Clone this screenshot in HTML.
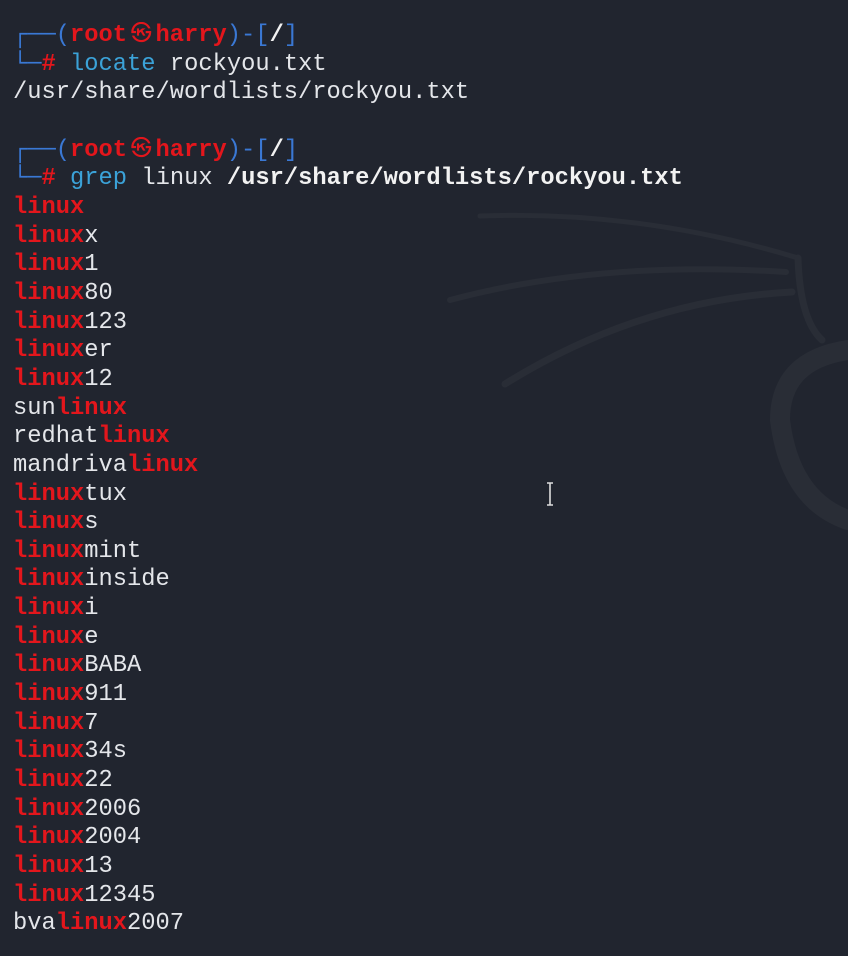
<!DOCTYPE html>
<html><head><meta charset="utf-8"><style>
html,body{margin:0;padding:0}
body{width:848px;height:956px;background:#21252f;overflow:hidden;position:relative;}
.bg{position:absolute;left:0;top:0}
pre{position:absolute;left:13px;top:22px;margin:0;font-family:"Liberation Mono","DejaVu Sans Mono",monospace;font-size:23.75px;line-height:28.65px;color:#e4e6ea;letter-spacing:0;}
.b{color:#3a78d4}.r{color:#e3161c;font-weight:bold}.c{color:#3ba2d8}.w{font-weight:bold;color:#f2f2f2}
.k{display:inline-block;width:28.5px;overflow:hidden;text-align:center;font-size:21px;vertical-align:top;font-weight:normal}
.cur{position:absolute;left:545px;top:482px;width:10px;height:24px}
</style></head><body>
<svg class="bg" width="848" height="956">
<g fill="none" stroke="#292d36" stroke-linecap="round">
<path d="M480 216 Q640 210 798 258" stroke-width="5"/>
<path d="M450 300 Q600 260 786 272" stroke-width="6"/>
<path d="M505 384 Q640 300 792 292" stroke-width="7"/>
<path d="M798 258 Q800 320 822 340" stroke-width="7"/>
<path d="M848 350 Q780 360 780 420 Q790 500 848 520" stroke-width="20"/>
</g>
</svg>
<pre><span class="b">┌──(</span><span class="r">root<span class="k">㉿</span>harry</span><span class="b">)-[</span><span class="w">/</span><span class="b">]</span>
<span class="b">└─</span><span class="r">#</span> <span class="c">locate</span> rockyou.txt
/usr/share/wordlists/rockyou.txt

<span class="b">┌──(</span><span class="r">root<span class="k">㉿</span>harry</span><span class="b">)-[</span><span class="w">/</span><span class="b">]</span>
<span class="b">└─</span><span class="r">#</span> <span class="c">grep</span> linux <span class="w">/usr/share/wordlists/rockyou.txt</span>
<span class="r">linux</span>
<span class="r">linux</span>x
<span class="r">linux</span>1
<span class="r">linux</span>80
<span class="r">linux</span>123
<span class="r">linux</span>er
<span class="r">linux</span>12
sun<span class="r">linux</span>
redhat<span class="r">linux</span>
mandriva<span class="r">linux</span>
<span class="r">linux</span>tux
<span class="r">linux</span>s
<span class="r">linux</span>mint
<span class="r">linux</span>inside
<span class="r">linux</span>i
<span class="r">linux</span>e
<span class="r">linux</span>BABA
<span class="r">linux</span>911
<span class="r">linux</span>7
<span class="r">linux</span>34s
<span class="r">linux</span>22
<span class="r">linux</span>2006
<span class="r">linux</span>2004
<span class="r">linux</span>13
<span class="r">linux</span>12345
bva<span class="r">linux</span>2007</pre>
<svg class="cur" viewBox="0 0 10 24"><path d="M2 1H8M5 1V23M2 23H8" stroke="#ddd" stroke-width="1.6" fill="none"/></svg>
</body></html>
